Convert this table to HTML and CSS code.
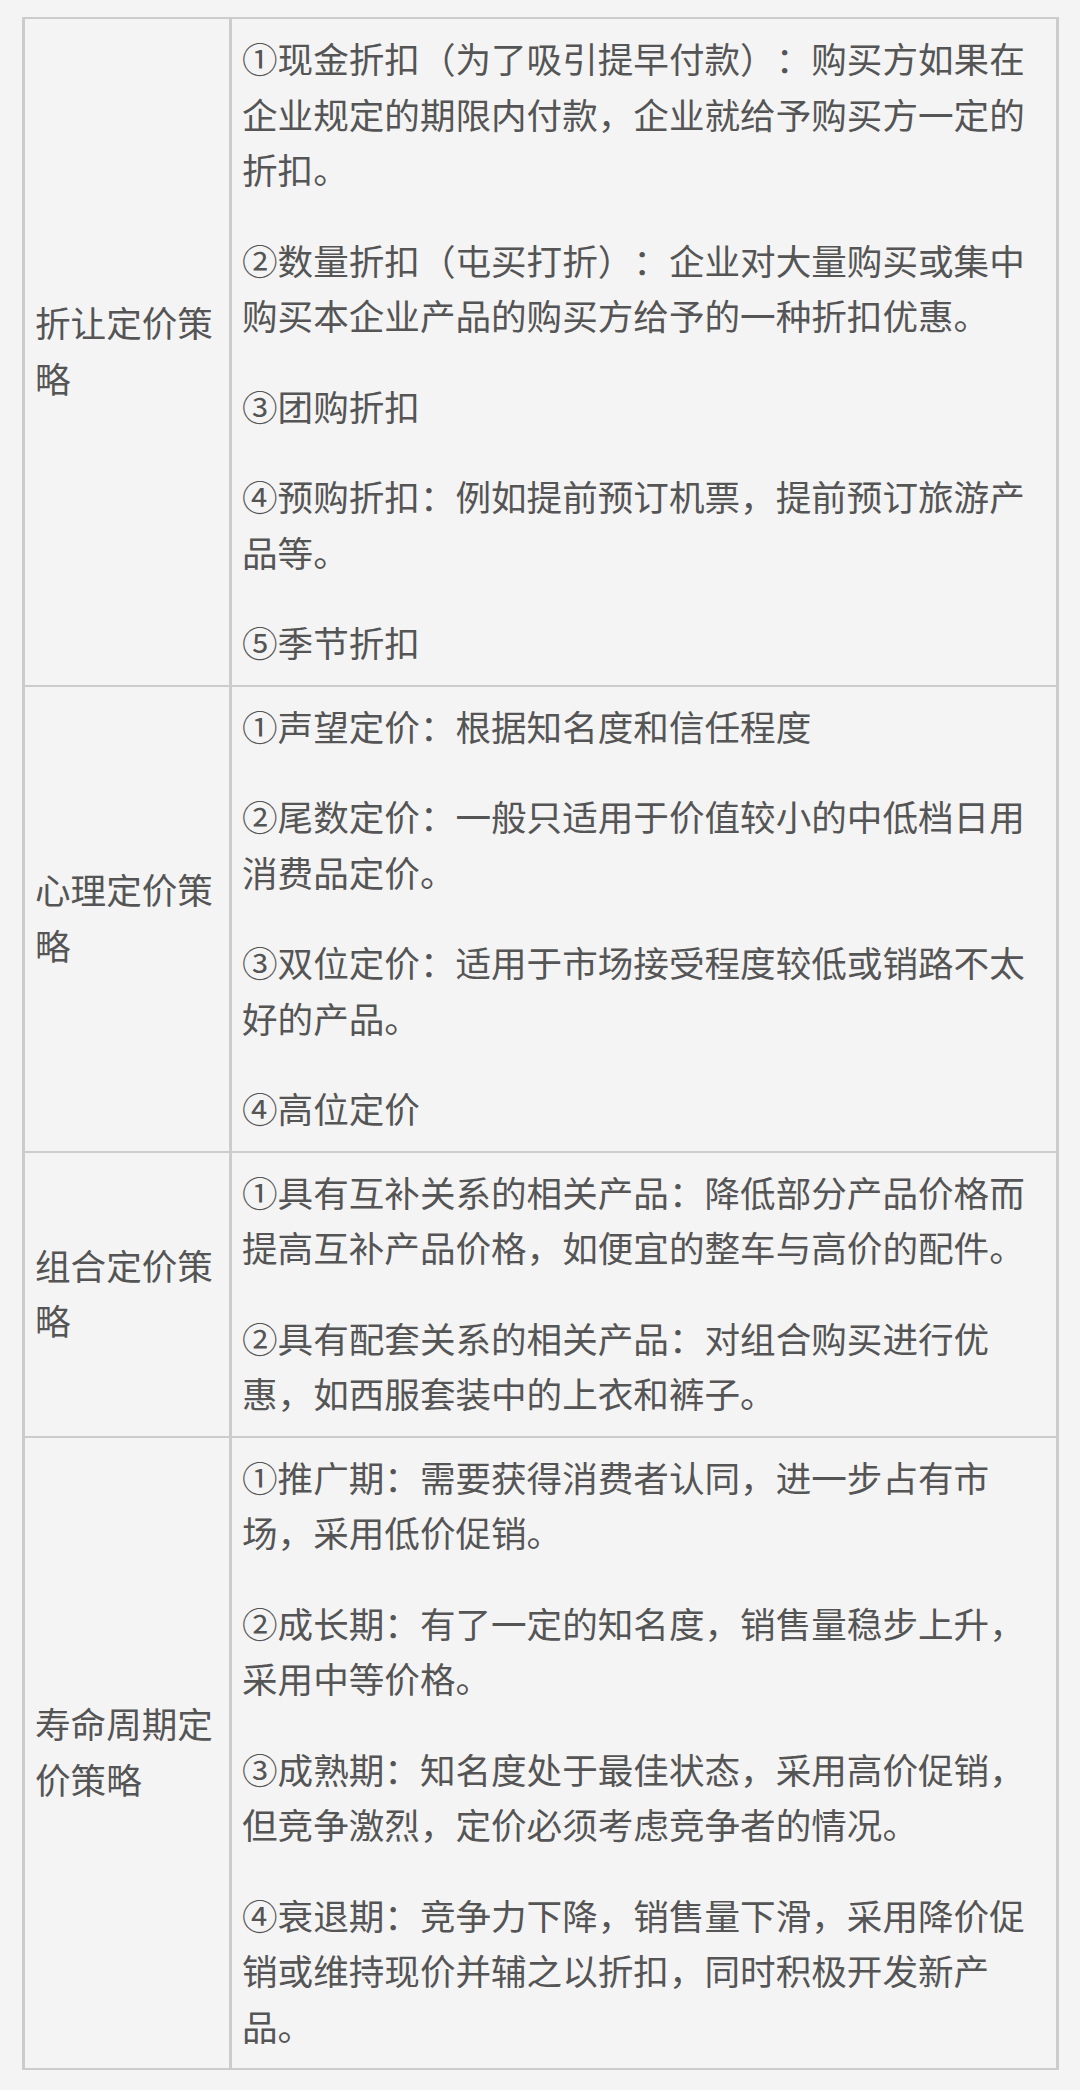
FILE: index.html
```html
<!DOCTYPE html>
<html lang="zh-CN">
<head>
<meta charset="utf-8">
<link rel="stylesheet" href="styles.css">
</head>
<body>
<table class="strategy">
  <tr>
    <td class="name">折让定价策略</td>
    <td class="desc">
      <p>①现金折扣（为了吸引提早付款）：购买方如果在企业规定的期限内付款，企业就给予购买方一定的折扣。</p>
      <p>②数量折扣（屯买打折）：企业对大量购买或集中购买本企业产品的购买方给予的一种折扣优惠。</p>
      <p>③团购折扣</p>
      <p>④预购折扣：例如提前预订机票，提前预订旅游产品等。</p>
      <p>⑤季节折扣</p>
    </td>
  </tr>
  <tr>
    <td class="name">心理定价策略</td>
    <td class="desc">
      <p>①声望定价：根据知名度和信任程度</p>
      <p>②尾数定价：一般只适用于价值较小的中低档日用消费品定价。</p>
      <p>③双位定价：适用于市场接受程度较低或销路不太好的产品。</p>
      <p>④高位定价</p>
    </td>
  </tr>
  <tr>
    <td class="name">组合定价策略</td>
    <td class="desc">
      <p>①具有互补关系的相关产品：降低部分产品价格而提高互补产品价格，如便宜的整车与高价的配件。</p>
      <p>②具有配套关系的相关产品：对组合购买进行优惠，如西服套装中的上衣和裤子。</p>
    </td>
  </tr>
  <tr>
    <td class="name">寿命周期定价策略</td>
    <td class="desc">
      <p>①推广期：需要获得消费者认同，进一步占有市场，采用低价促销。</p>
      <p>②成长期：有了一定的知名度，销售量稳步上升，采用中等价格。</p>
      <p>③成熟期：知名度处于最佳状态，采用高价促销，但竞争激烈，定价必须考虑竞争者的情况。</p>
      <p>④衰退期：竞争力下降，销售量下滑，采用降价促销或维持现价并辅之以折扣，同时积极开发新产品。</p>
    </td>
  </tr>
</table>
</body>
</html>
```

FILE: styles.css
```css
html, body {
  background: #f4f4f4;
}
body {
  margin: 17px 0 0 22px;
  font-family: "Noto Sans CJK SC", "Noto Sans", sans-serif;
  font-size: 35.6px;
  line-height: 55.5px;
  color: #555555;
  text-spacing-trim: space-all;
}
.strategy {
  border-collapse: collapse;
  width: 1037px;
  table-layout: fixed;
}
.strategy td {
  border-top: 2px solid #cccccc;
  border-bottom: 2px solid #cccccc;
  border-left: 3px solid #cccccc;
  border-right: 3px solid #cccccc;
  padding: 11px 10px 15px 10px;
}
.strategy td.name {
  width: 184px;
  vertical-align: middle;
}
.strategy td.desc {
  vertical-align: top;
}
.desc p {
  margin: 0 0 35px 0;
}
.desc p:last-child {
  margin-bottom: 0;
}
```
